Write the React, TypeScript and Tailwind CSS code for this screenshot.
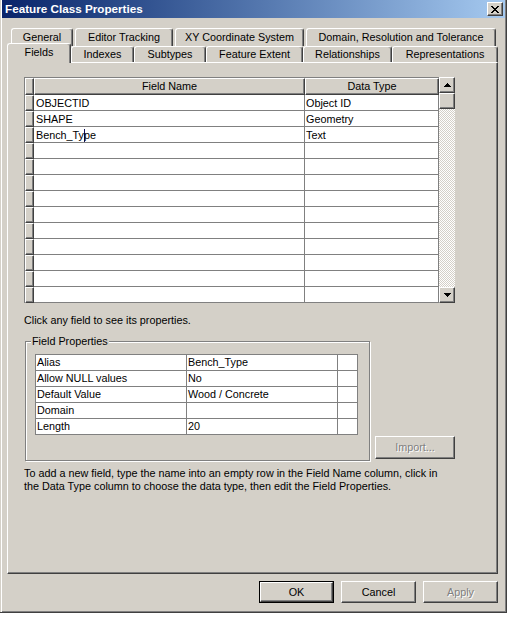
import React from 'react';

// classic 3D raised edge used by buttons, headers and scroll arrows
const raised =
  'bg-[#d4d0c8] border-t border-l border-t-white border-l-white border-r border-b border-r-[#404040] border-b-[#404040] shadow-[inset_-1px_-1px_#808080]';

const tabBase =
  'flex items-center justify-center bg-[#d4d0c8] border-t border-l border-t-white border-l-white border-r border-r-[#404040] shadow-[inset_-1px_0_#808080] rounded-t-[3px]';

const Tab: React.FC<{ label: string; className: string }> = ({ label, className }) => (
  <div className={`${tabBase} ${className}`}>{label}</div>
);

const ArrowUp = () => (
  <svg width="7" height="4" viewBox="0 0 7 4">
    <path d="M3 0h1v1h1v1h1v1h1v1H0V3h1V2h1V1h1z" fill="#000" />
  </svg>
);

const ArrowDown = () => (
  <svg width="7" height="4" viewBox="0 0 7 4">
    <path d="M0 0h7v1H6v1H5v1H4v1H3V3H2V2H1V1H0z" fill="#000" />
  </svg>
);

type Field = { name: React.ReactNode; type: string };

const fields: Field[] = [
  { name: 'OBJECTID', type: 'Object ID' },
  { name: 'SHAPE', type: 'Geometry' },
  {
    name: (
      <>
        Bench_Ty
        <span className="inline-block w-px h-[13px] -mr-px align-[-3px] bg-[#10105a]" />
        pe
      </>
    ),
    type: 'Text',
  },
];

const props: [string, string][] = [
  ['Alias', 'Bench_Type'],
  ['Allow NULL values', 'No'],
  ['Default Value', 'Wood / Concrete'],
  ['Domain', ''],
  ['Length', '20'],
];

const ROWS = 13;

const FieldGrid = () => (
  <div className="flex">
    <div className="w-[415px] border-l border-t border-[#808080]">
      <div className="flex h-[17px]">
        <div className={`w-[9px] ${raised}`} />
        <div className={`w-[271px] ${raised} flex items-center justify-center`}>Field Name</div>
        <div className={`w-[134px] ${raised} flex items-center justify-center`}>Data Type</div>
      </div>
      {Array.from({ length: ROWS }).map((_, i) => {
        const f = fields[i];
        return (
          <div key={i} className="flex h-[16px]">
            <div className={`w-[9px] ${raised}`} />
            <div className="w-[271px] bg-white border-r border-b border-[#808080] pl-[2px] leading-[16px] whitespace-nowrap">
              {f?.name}
            </div>
            <div className="w-[134px] bg-white border-r border-b border-[#808080] pl-[1px] leading-[16px]">
              {f?.type}
            </div>
          </div>
        );
      })}
    </div>
    <div className="w-[16px] flex flex-col">
      <div className={`h-[16px] ${raised} flex items-center justify-center`}>
        <ArrowUp />
      </div>
      <div className={`h-[16px] ${raised}`} />
      <div className="flex-1 bg-[repeating-conic-gradient(#fff_0_25%,#d4d0c8_0_50%)] bg-[length:2px_2px]" />
      <div className={`h-[16px] ${raised} flex items-center justify-center`}>
        <ArrowDown />
      </div>
    </div>
  </div>
);

const FieldProperties = () => (
  <div className="relative w-[345px] h-[120px] border border-[#808080] shadow-[1px_1px_#fff,inset_1px_1px_#fff] pl-[9px] pt-[12px]">
    <span className="absolute left-[5px] -top-[7px] px-px bg-[#d4d0c8] leading-[13px]">Field Properties</span>
    <div className="grid grid-cols-[150px_150px_19px] gap-px bg-[#808080] border border-[#808080] w-[323px]">
      {props.map(([k, v]) => (
        <React.Fragment key={k}>
          <div className="bg-white h-[15px] pl-[1px] leading-[15px]">{k}</div>
          <div className="bg-white h-[15px] pl-[1px] leading-[15px]">{v}</div>
          <div className="bg-white h-[15px]" />
        </React.Fragment>
      ))}
    </div>
  </div>
);

const Button: React.FC<{ label: string; disabled?: boolean; isDefault?: boolean; className?: string }> = ({
  label,
  disabled,
  isDefault,
  className = '',
}) => {
  const text = disabled ? 'text-[#808080] [text-shadow:1px_1px_0_#fff]' : '';
  if (isDefault) {
    return (
      <div className={`border border-black ${className}`}>
        <div className={`h-full ${raised} flex items-center justify-center ${text}`}>{label}</div>
      </div>
    );
  }
  return <div className={`${raised} flex items-center justify-center ${text} ${className}`}>{label}</div>;
};

export default function App() {
  return (
    <div className="w-[511px] h-[618px] bg-white font-['Liberation_Sans',Arial,sans-serif] text-[10.8px] text-black">
      <div className="w-[507px] h-[613px] bg-[#d4d0c8] border-r border-b border-r-[#404040] border-b-[#404040] shadow-[inset_1px_0_#d4d0c8,inset_2px_0_#fff,inset_-1px_-1px_#808080] flex flex-col">
        {/* title bar */}
        <div className="ml-[2px] w-[503px] h-[18px] bg-gradient-to-r from-[#0a246a] to-[#a6caf0] flex items-center justify-between pl-[3px] pr-[2px]">
          <span className="text-white font-bold text-[11.7px] leading-none">Feature Class Properties</span>
          <div className={`w-[16px] h-[14px] ${raised} flex items-center justify-center`}>
            <svg width="8" height="7" viewBox="0 0 8 7">
              <path d="M0 0h2v1h1v1h2V1h1V0h2v1H7v1H6v1H5v1h1v1h1v1h1v1H6V6H5V5H3v1H2v1H0V6h1V5h1V4h1V3H2V2H1V1H0z" fill="#000" />
            </svg>
          </div>
        </div>

        {/* tabs, back row */}
        <div className="flex gap-[2px] ml-[11px] mt-[10px] h-[18px]">
          <Tab label="General" className="w-[62px] h-[18px]" />
          <Tab label="Editor Tracking" className="w-[98px] h-[18px]" />
          <Tab label="XY Coordinate System" className="w-[129px] h-[18px]" />
          <Tab label="Domain, Resolution and Tolerance" className="w-[190px] h-[18px]" />
        </div>
        {/* tabs, front row */}
        <div className="relative z-10 flex items-end ml-[7px] -mt-[3px] h-[19px]">
          <Tab label="Fields" className="w-[64px] h-[20px] -mb-px pb-[2px]" />
          <Tab label="Indexes" className="w-[63px] h-[16px]" />
          <Tab label="Subtypes" className="w-[72px] h-[16px]" />
          <Tab label="Feature Extent" className="w-[97px] h-[16px]" />
          <Tab label="Relationships" className="w-[89px] h-[16px]" />
          <Tab label="Representations" className="w-[106px] h-[16px]" />
        </div>

        {/* page */}
        <div className={`ml-[7px] w-[491px] h-[512px] ${raised} pl-[16px] pt-[14px] flex flex-col`}>
          <FieldGrid />
          <p className="mt-[11px] h-[13px] leading-[13px]">Click any field to see its properties.</p>
          <div className="mt-[14px] ml-px flex items-end gap-[5px]">
            <FieldProperties />
            <Button label="Import..." disabled className="w-[80px] h-[23px] mb-[2px]" />
          </div>
          <p className="mt-[6px] leading-[13px]">
            To add a new field, type the name into an empty row in the Field Name column, click in
            <br />
            the Data Type column to choose the data type, then edit the Field Properties.
          </p>
        </div>

        {/* dialog buttons */}
        <div className="flex gap-[7px] ml-[259px] mt-[7px]">
          <Button label="OK" isDefault className="w-[75px] h-[22px]" />
          <Button label="Cancel" className="w-[75px] h-[22px]" />
          <Button label="Apply" disabled className="w-[75px] h-[22px]" />
        </div>
      </div>
    </div>
  );
}
